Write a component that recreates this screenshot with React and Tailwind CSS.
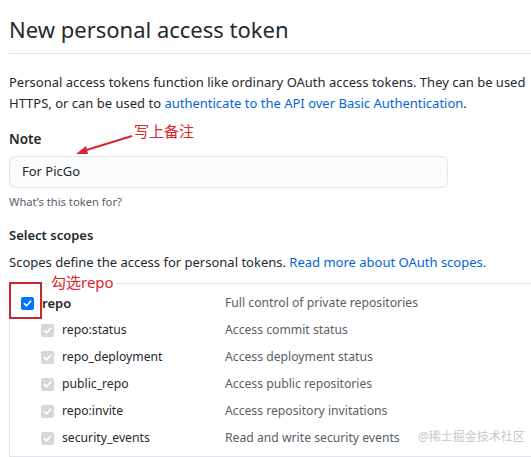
import React from 'react';

const scopes = [
  { name: 'repo:status', desc: 'Access commit status' },
  { name: 'repo_deployment', desc: 'Access deployment status' },
  { name: 'public_repo', desc: 'Access public repositories' },
  { name: 'repo:invite', desc: 'Access repository invitations' },
  { name: 'security_events', desc: 'Read and write security events' },
];

const Check = ({ on }) => (
  <span
    className={`flex items-center justify-center w-[13px] h-[13px] rounded-[2px] ${
      on ? 'bg-[#0075ff]' : 'bg-[#d7d7d7]'
    }`}
  >
    <svg width="9" height="9" viewBox="0 0 10 10">
      <path d="M1.5 5.2 L4 7.6 L8.5 2.4" fill="none" stroke="white" strokeWidth="1.8" strokeLinecap="round" strokeLinejoin="round" />
    </svg>
  </span>
);

export default function App() {
  return (
    <div
      className="relative w-[531px] h-[457px] overflow-hidden bg-white text-[#24292e] text-[13px] pl-[9px]"
      style={{ fontFamily: '"Noto Sans", "Noto Sans CJK SC", sans-serif' }}
    >
      {/* Header */}
      <div className="pt-[11px] pb-[6px] border-b border-[#e1e4e8]">
        <h2 className="text-[22px] leading-[36px] font-normal">New personal access token</h2>
      </div>

      <p className="mt-[18px] leading-[21px] whitespace-nowrap">
        Personal access tokens function like ordinary OAuth access tokens. They can be used
        <br />
        HTTPS, or can be used to{' '}
        <span className="text-[#0366d6]">authenticate to the API over Basic Authentication</span>.
      </p>

      {/* Note */}
      <div className="mt-[15px] font-semibold leading-[21px] text-[13.5px]">Note</div>
      <div className="mt-[6px] w-[439px] h-[32px] rounded-[6px] border border-[#e1e4e8] bg-[#fafbfc] flex items-center pl-[12px]">
        For PicGo
      </div>
      <div className="mt-[5px] text-[11.2px] leading-[18px] text-[#586069]">What’s this token for?</div>

      {/* Scopes */}
      <div className="mt-[14px] font-semibold leading-[21px] text-[13px]">Select scopes</div>
      <div className="mt-[6px] leading-[21px] whitespace-nowrap">
        Scopes define the access for personal tokens.{' '}
        <span className="text-[#0366d6]">Read more about OAuth scopes.</span>
      </div>

      <div className="mt-[10px] border-t border-b border-l border-[#e1e4e8] pt-[6px] pb-[4px] text-[12.2px]">
        <div className="flex items-center h-[27px] pl-[11px]">
          <div className="flex items-center w-[204px]">
            <Check on />
            <span className="ml-[8px] font-semibold text-[13px]">repo</span>
          </div>
          <span className="text-[#586069]">Full control of private repositories</span>
        </div>
        {scopes.map((s) => (
          <div key={s.name} className="flex items-center h-[27px] pl-[31px]">
            <div className="flex items-center w-[184px]">
              <Check />
              <span className="ml-[8px]">{s.name}</span>
            </div>
            <span className="text-[#586069]">{s.desc}</span>
          </div>
        ))}
      </div>

      {/* Annotations */}
      <svg className="absolute left-[70px] top-[130px]" width="70" height="30" viewBox="0 0 70 30">
        <path d="M62 6 L10 22" stroke="#d9262c" strokeWidth="2" fill="none" />
        <path d="M6 24 L16 16 L18 24 Z" fill="#d9262c" />
      </svg>
      <div className="absolute left-[134px] top-[121px] text-[15px] leading-[20px] text-[#d9262c]">写上备注</div>

      <div className="absolute left-[49px] top-[272px] px-[2px] bg-white text-[15px] leading-[20px] text-[#d9262c]">勾选repo</div>
      <div className="absolute left-[9px] top-[282px] w-[33px] h-[37px] border-2 border-[#c9282e]" />

      <div className="absolute left-[418px] top-[428px] text-[12px] leading-[18px] text-[#c8c8c8]">@稀土掘金技术社区</div>
    </div>
  );
}
